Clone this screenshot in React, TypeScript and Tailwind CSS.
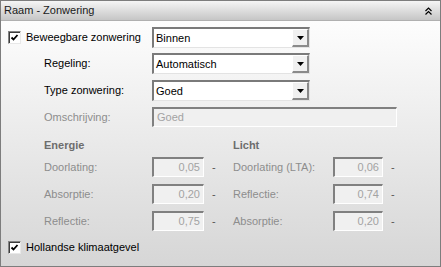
import React from "react";

const font = { fontFamily: '"Liberation Sans", Arial, sans-serif' };

function Check() {
  return (
    <div className="w-[13px] h-[13px] bg-white border-t border-l border-t-[#848484] border-l-[#848484] border-b border-r border-b-[#e8e8e8] border-r-[#e8e8e8] shadow-[inset_1px_1px_0_#3c3c3c] flex items-center justify-center shrink-0">
      <svg width="9" height="9" viewBox="0 0 9 9">
        <path d="M1.5 4.5 L3.5 6.5 L7.5 2" stroke="#000" strokeWidth="1.8" fill="none" />
      </svg>
    </div>
  );
}

function Select({ value }: { value: string }) {
  return (
    <div className="w-[158px] h-[21px] flex bg-white border-t-2 border-l-2 border-t-[#7a7a7a] border-l-[#7a7a7a] border-b border-r border-b-[#e3e3e3] border-r-[#e3e3e3]">
      <div className="flex-1 flex items-center pl-[2px] text-[11px] text-black leading-none">{value}</div>
      <div className="w-[17px] h-full bg-[#f0f0f0] border-r-2 border-b-2 border-r-[#8a8a8a] border-b-[#8a8a8a] border-l border-t border-l-white border-t-white flex items-center justify-center">
        <svg width="7" height="4" viewBox="0 0 7 4">
          <path d="M0 0 H7 L3.5 4 Z" fill="#000" />
        </svg>
      </div>
    </div>
  );
}

function Box({ value, w, right }: { value: string; w: string; right?: boolean }) {
  return (
    <div
      className={`${w} h-[20px] bg-[#f0f0f0] border-t-2 border-l-2 border-t-[#808080] border-l-[#808080] border-b border-r border-b-white border-r-white flex items-center text-[11px] text-[#a3a3a3] leading-none ${
        right ? "justify-end pr-[3px]" : "pl-[3px]"
      }`}
    >
      {value}
    </div>
  );
}

function ValRow({ label, value, lw, bw }: { label: string; value: string; lw: string; bw: string }) {
  return (
    <div className="flex items-center h-[20px]">
      <div className={`${lw} text-[11px] text-[#8d8d8d]`}>{label}</div>
      <Box value={value} w={bw} right />
      <div className="ml-[8px] text-[11px] text-[#555]">-</div>
    </div>
  );
}

export default function App() {
  return (
    <div style={font} className="w-[441px] h-[267px] border border-[#7d7d7d] flex flex-col overflow-hidden">
      <div className="h-[20px] shrink-0 bg-gradient-to-b from-[#f5f5f5] to-[#c6c6c6] border-b border-[#b0b0b0] flex items-center justify-between pl-[3px] pr-[8px]">
        <span className="text-[11px] text-[#1a1a1a]">Raam - Zonwering</span>
        <svg width="7" height="8" viewBox="0 0 7 8">
          <path d="M0.5 4 L3.5 1 L6.5 4 M0.5 7.5 L3.5 4.5 L6.5 7.5" stroke="#000" strokeWidth="1.2" fill="none" />
        </svg>
      </div>
      <div className="flex-1 bg-gradient-to-b from-[#fdfdfd] to-[#d6d6d6] pt-[6px] pl-[7px] flex flex-col">
        <div className="flex items-center h-[21px]">
          <div className="w-[144px] flex items-center">
            <Check />
            <span className="ml-[5px] text-[11px] text-black">Beweegbare zonwering</span>
          </div>
          <Select value="Binnen" />
        </div>
        <div className="flex items-center h-[21px] mt-[5px] pl-[36px]">
          <div className="w-[108px] text-[11px] text-black">Regeling:</div>
          <Select value="Automatisch" />
        </div>
        <div className="flex items-center h-[21px] mt-[6px] pl-[36px]">
          <div className="w-[108px] text-[11px] text-black">Type zonwering:</div>
          <Select value="Goed" />
        </div>
        <div className="flex items-center h-[20px] mt-[6px] pl-[36px]">
          <div className="w-[108px] text-[11px] text-[#8d8d8d]">Omschrijving:</div>
          <Box value="Goed" w="w-[245px]" />
        </div>
        <div className="flex pl-[36px] mt-[11px]">
          <div className="w-[189px] flex flex-col">
            <div className="h-[14px] text-[11px] font-bold text-[#6d6d6d] leading-[14px]">Energie</div>
            <div className="flex flex-col gap-[7px] mt-[5px]">
              <ValRow label="Doorlating:" value="0,05" lw="w-[108px]" bw="w-[52px]" />
              <ValRow label="Absorptie:" value="0,20" lw="w-[108px]" bw="w-[52px]" />
              <ValRow label="Reflectie:" value="0,75" lw="w-[108px]" bw="w-[52px]" />
            </div>
          </div>
          <div className="flex flex-col">
            <div className="h-[14px] text-[11px] font-bold text-[#6d6d6d] leading-[14px]">Licht</div>
            <div className="flex flex-col gap-[7px] mt-[5px]">
              <ValRow label="Doorlating (LTA):" value="0,06" lw="w-[100px]" bw="w-[50px]" />
              <ValRow label="Reflectie:" value="0,74" lw="w-[100px]" bw="w-[50px]" />
              <ValRow label="Absorptie:" value="0,20" lw="w-[100px]" bw="w-[50px]" />
            </div>
          </div>
        </div>
        <div className="flex items-center mt-[10px] h-[13px]">
          <Check />
          <span className="ml-[5px] text-[11px] text-black">Hollandse klimaatgevel</span>
        </div>
      </div>
    </div>
  );
}
